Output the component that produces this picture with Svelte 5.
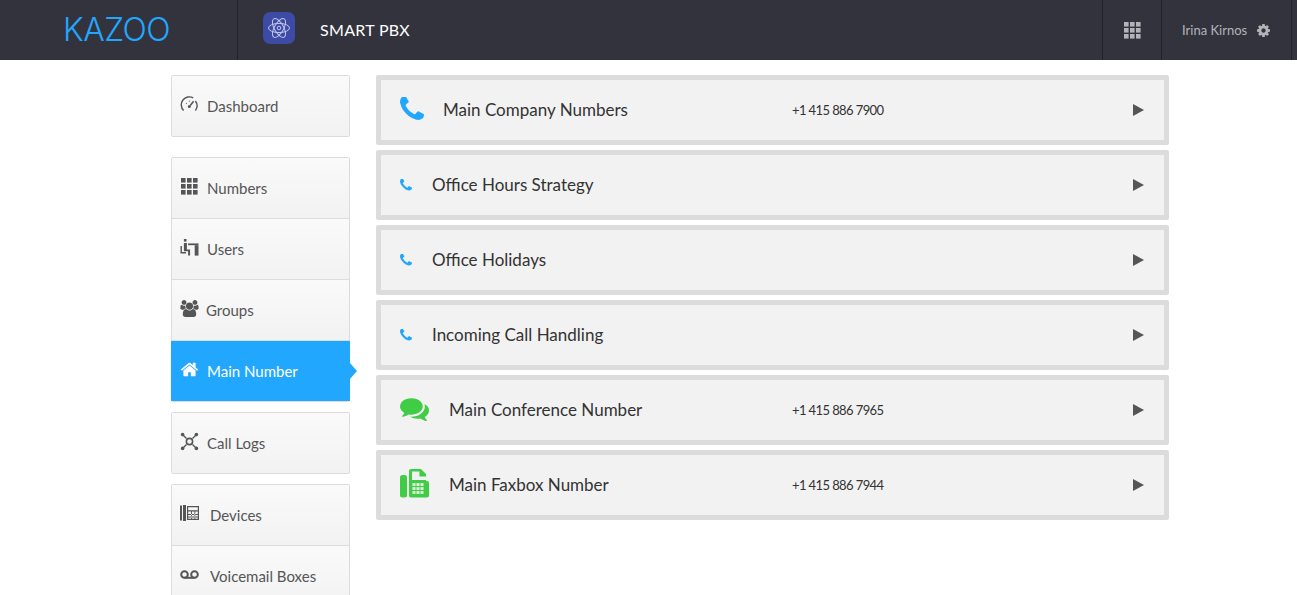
<script>
  const phone = 'M1600 1240q0 27-10 70.5t-21 68.5q-21 50-122 106-94 51-186 51-27 0-53-3.5t-57.5-12.5-47-14.5-55.5-20.5-49-18q-98-35-175-83-127-79-264-216t-216-264q-48-77-83-175-3-9-18-49t-20.5-55.5-14.5-47-12.5-57.5-3.5-53q0-92 51-186 56-101 106-122 25-11 68.5-21t70.5-10q14 0 21 3 18 6 53 76 11 19 30 54t35 63.5 31 53.5q3 4 17.5 25t21.5 35.5 7 28.5q0 20-28.5 50t-62 55-62 53-28.5 46q0 9 5 22.5t8.5 20.5 14 24 11.5 19q76 137 174 235t235 174q2 1 19 11.5t24 14 20.5 8.5 22.5 5q18 0 46-28.5t53-62 55-62 50-28.5q14 0 28.5 7t35.5 21.5 25 17.5q25 15 53.5 31t63.5 35 54 30q70 35 76 53 3 7 3 21z';
  const comments = 'M1408 768q0 139-94 257t-256.5 186.5-353.5 68.5q-86 0-176-16-124 88-278 128-36 9-86 16h-3q-11 0-20.5-8t-11.5-21q-1-3-1-6.5t.5-6.5 2-6l2.5-5 3.5-5.5 4-5 4.5-5 4-4.5q5-6 23-25t26-29.5 22.5-29 25-38.5 20.5-44q-124-72-195-177t-71-224q0-139 94-257t256.5-186.5 353.5-68.5 353.5 68.5 256.5 186.5 94 257zm384 256q0 120-71 224.5t-195 176.5q10 24 20.5 44t25 38.5 22.5 29 26 29.5 23 25q1 1 4 4.5t4.5 5 4 5 3.5 5.5l2.5 5 2 6 .5 6.5-1 6.5q-3 14-13 22t-22 7q-50-7-86-16-154-40-278-128-90 16-176 16-271 0-472-132 58 4 88 4 161 0 309-45t264-129q125-92 192-212t67-254q0-77-23-152 129 71 204 178t75 230z';
  const home = 'M1472 992v480q0 26-19 45t-45 19h-384v-384h-256v384h-384q-26 0-45-19t-19-45v-480q0-1 .5-3t.5-3l575-474 575 474q1 2 1 6zm223-69l-62 74q-8 9-21 11h-3q-13 0-21-7l-692-577-692 577q-12 8-24 7-13-2-21-11l-62-74q-8-10-7-23.5t11-21.5l719-599q32-26 76-26t76 26l244 204v-195q0-14 9-23t23-9h192q14 0 23 9t9 23v408l219 182q10 8 11 21.5t-7 23.5z';
  const group = 'M529 896q-162 5-265 128h-134q-82 0-138-40.5t-56-118.5q0-353 124-353 6 0 43.5 21t97.5 42.5 119 21.5q67 0 133-23-5 37-5 66 0 139 81 256zm1071 637q0 120-73 189.5t-194 69.5h-874q-121 0-194-69.5t-73-189.5q0-53 3.5-103.5t14-109 26.5-108.5 43-97.5 62-81 85.5-53.5 111.5-20q10 0 43 21.5t73 48 107 48 135 21.5 135-21.5 107-48 73-48 43-21.5q61 0 111.5 20t85.5 53.5 62 81 43 97.5 26.5 108.5 14 109 3.5 103.5zm-1024-1277q0 106-75 181t-181 75-181-75-75-181 75-181 181-75 181 75 75 181zm704 384q0 159-112.5 271.5t-271.5 112.5-271.5-112.5-112.5-271.5 112.5-271.5 271.5-112.5 271.5 112.5 112.5 271.5zm576 225q0 78-56 118.5t-138 40.5h-134q-103-123-265-128 81-117 81-256 0-29-5-66 66 23 133 23 59 0 119-21.5t97.5-42.5 43.5-21q124 0 124 353zm-128-609q0 106-75 181t-181 75-181-75-75-181 75-181 181-75 181 75 75 181z';
  const gear = 'M1152 896q0-106-75-181t-181-75-181 75-75 181 75 181 181 75 181-75 75-181zm512-109v222q0 12-8 23t-20 13l-185 28q-19 54-39 91 35 50 107 138 10 12 10 25t-9 23q-27 37-99 108t-94 71q-12 0-26-9l-138-108q-44 23-91 38-16 136-29 186-7 28-36 28h-222q-14 0-24.5-8.5t-11.5-21.5l-28-184q-49-16-90-37l-141 107q-10 9-25 9-14 0-25-11-126-114-165-168-7-10-7-23 0-12 8-23 15-21 51-66.5t54-70.5q-27-50-41-99l-183-27q-13-2-21-12.5t-8-23.5v-222q0-12 8-23t19-13l186-28q14-46 39-92-40-57-107-138-10-12-10-24 0-10 9-23 26-36 98.5-107.5t94.5-71.5q13 0 26 10l138 107q44-23 91-38 16-136 29-186 7-28 36-28h222q14 0 24.5 8.5t11.5 21.5l28 184q49 16 90 37l142-107q9-9 24-9 13 0 25 10 129 119 165 170 7 8 7 22 0 12-8 23-15 21-51 66.5t-54 70.5q26 50 41 98l183 28q13 2 21 12.5t8 23.5z';

  const rows = [
    { name: 'Main Company Numbers', number: '+1 415 886 7900', icon: 'phone', slot: 'wide' },
    { name: 'Office Hours Strategy', icon: 'phone-sm', slot: 'narrow' },
    { name: 'Office Holidays', icon: 'phone-sm', slot: 'narrow' },
    { name: 'Incoming Call Handling', icon: 'phone-sm', slot: 'narrow' },
    { name: 'Main Conference Number', number: '+1 415 886 7965', icon: 'chat', slot: 'widest' },
    { name: 'Main Faxbox Number', number: '+1 415 886 7944', icon: 'fax', slot: 'widest' }
  ];
</script>

<div class="page">
  <header class="topbar">
    <div class="logo-cell"><span class="logo">KAZOO</span></div>
    <div class="app-cell">
      <span class="app-icon">
        <svg width="32" height="32" viewBox="0 0 32 32" fill="none" stroke="#c3c8e6" stroke-width="1">
          <ellipse cx="16" cy="16" rx="10.5" ry="4.6" />
          <ellipse cx="16" cy="16" rx="10.5" ry="4.6" transform="rotate(60 16 16)" />
          <ellipse cx="16" cy="16" rx="10.5" ry="4.6" transform="rotate(120 16 16)" />
          <circle cx="16" cy="16" r="1.8" />
        </svg>
      </span>
      <span class="app-name">SMART PBX</span>
    </div>
    <div class="launcher">
      <svg width="17" height="17" viewBox="0 0 17 17" fill="#b4b4b8">
        {#each [0, 6, 12] as y}
          {#each [0, 6, 12] as x}
            <rect {x} {y} width="4.6" height="4.6" />
          {/each}
        {/each}
      </svg>
    </div>
    <div class="user">
      <span>Irina Kirnos</span>
      <svg width="13" height="13" viewBox="128 128 1536 1536" fill="#b4b4b8"><path d={gear} /></svg>
    </div>
  </header>

  <main class="body">
    <nav class="sidebar">
      <div class="nav-group">
        <div class="nav-item">
          <svg class="nav-icon" width="19" height="19" viewBox="0 0 19 19" fill="none" stroke="#555" stroke-width="1.4">
            <path d="M3.6 15.5a8 8 0 0 1 9.6-12.6M15.4 6a8 8 0 0 1 0 9.5" />
            <path d="M6.2 8.3l.5.5M9.5 5.8v.8" />
            <path d="M13.6 6.2l-3.4 4.4" stroke-width="1.6" />
            <circle cx="9.3" cy="11.6" r="1.5" fill="#555" stroke="none" />
          </svg>
          <span>Dashboard</span>
        </div>
      </div>

      <div class="nav-group">
        <div class="nav-item">
          <svg class="nav-icon" width="17" height="17" viewBox="0 0 17 17" fill="#555">
            {#each [0, 6, 12] as y}
              {#each [0, 6, 12] as x}
                <rect {x} {y} width="4.6" height="4.6" />
              {/each}
            {/each}
          </svg>
          <span>Numbers</span>
        </div>
        <div class="nav-item">
          <svg class="nav-icon" width="18" height="17" viewBox="0 0 18 17" fill="#555">
            <rect x="3.4" y="0" width="2.6" height="2.6" />
            <path d="M0 7h1.4v6H5.5v1.4H0z" />
            <path d="M3.4 4h3v6.4h3.2v6.2H7.6v-4.4H3.4z" />
            <path d="M7.6 4.4H18V6.2H7.6z" />
            <path d="M14.2 6.2H18v10.4h-3.8z" />
          </svg>
          <span>Users</span>
        </div>
        <div class="nav-item">
          <svg class="nav-icon groups" width="18" height="17" viewBox="-64 0 1920 1792" fill="#555"><path d={group} /></svg>
          <span>Groups</span>
        </div>
        <div class="nav-item active">
          <svg class="nav-icon" width="18" height="17" viewBox="0 128 1792 1536" fill="#fff"><path d={home} /></svg>
          <span>Main Number</span>
        </div>
      </div>

      <div class="nav-group">
        <div class="nav-item">
          <svg class="nav-icon" width="19" height="19" viewBox="0 0 19 19" fill="#555" stroke="#555" stroke-width="1.4">
            <path d="M3 3l3.5 3.5M16 3l-3.5 3.5M3 16l3.5-3.5M16 16l-3.5-3.5" />
            <circle cx="9.5" cy="9.5" r="3.1" fill="none" stroke-width="1.6" />
            <circle cx="2.6" cy="2.6" r="1.8" stroke="none" />
            <circle cx="16.4" cy="2.6" r="1.8" stroke="none" />
            <circle cx="2.6" cy="16.4" r="1.8" stroke="none" />
            <circle cx="16.4" cy="16.4" r="1.8" stroke="none" />
          </svg>
          <span>Call Logs</span>
        </div>
      </div>

      <div class="nav-group">
        <div class="nav-item">
          <svg class="nav-icon devices" width="19" height="16" viewBox="0 0 19 16" fill="#555">
            <rect x="0" y="0.5" width="2" height="15" />
            <rect x="3" y="0" width="3" height="16" />
            <path d="M7 1h12v14H7zM8.2 2.2v3h9.6v-3zM8.2 6.4v7.4h9.6V6.4z" fill-rule="evenodd" />
            <path d="M8 9h10v.9H8zM8 11.6h10v.9H8zM11 6v8h.9V6zM14.4 6v8h.9V6z" />
          </svg>
          <span>Devices</span>
        </div>
        <div class="nav-item">
          <svg class="nav-icon vm" width="19" height="9" viewBox="0 0 19 9" fill="none" stroke="#555" stroke-width="2">
            <circle cx="4.5" cy="4.5" r="3.3" />
            <circle cx="14.5" cy="4.5" r="3.3" />
            <path d="M4.5 7.8h10" />
          </svg>
          <span>Voicemail Boxes</span>
        </div>
      </div>
    </nav>

    <section class="rows">
      {#each rows as row}
        <div class="row">
          <div class="row-left">
            <span class="row-icon {row.slot}">
              {#if row.icon === 'phone'}
                <svg width="24" height="24" viewBox="192 192 1408 1408" fill="#22a7ff"><path d={phone} /></svg>
              {:else if row.icon === 'phone-sm'}
                <svg width="12" height="12" viewBox="192 192 1408 1408" fill="#22a7ff"><path d={phone} /></svg>
              {:else if row.icon === 'chat'}
                <svg width="29" height="25" viewBox="0 128 1792 1536" fill="#41cc46"><path d={comments} /></svg>
              {:else}
                <svg width="29" height="29" viewBox="0 0 29 29" fill="#41cc46">
                  <rect x="0" y="6" width="7" height="22.5" rx="2.5" />
                  <path d="M9 12V2a2 2 0 0 1 2-2h10l5 5v7h1a2 2 0 0 1 2 2v12.5a2 2 0 0 1-2 2H11a2 2 0 0 1-2-2z" />
                  <path d="M12 2.4h7.4v5.2H26v3.4H12z" fill="#f2f2f2" />
                  {#each [14, 18, 22] as y}
                    {#each [12.5, 16.5, 20.5] as x}
                      <rect {x} {y} width="3" height="3" fill="#d9f5da" />
                    {/each}
                  {/each}
                </svg>
              {/if}
            </span>
            <span class="row-name">{row.name}</span>
          </div>
          {#if row.number}<span class="row-number">{row.number}</span>{/if}
          <svg class="row-arrow" width="11" height="12" viewBox="0 0 11 12" fill="#555"><path d="M0 0l11 6-11 6z" /></svg>
        </div>
      {/each}
    </section>
  </main>
</div>

<style>
  :global(body) {
    background: #fff;
  }

  .page {
    height: 595px;
    overflow: hidden;
    font-family: "Lato", "Liberation Sans", sans-serif;
  }

  .topbar {
    display: flex;
    align-items: stretch;
    height: 60px;
    background: #32333d;
    padding-right: 5px;
    box-sizing: border-box;
  }

  .logo-cell {
    width: 238px;
    box-sizing: border-box;
    border-right: 1px solid #22232a;
    padding-left: 63px;
    display: flex;
    align-items: center;
  }

  .logo {
    font-family: "Inter", sans-serif;
    font-weight: 300;
    font-size: 32px;
    letter-spacing: -0.5px;
    color: #22a7ff;
    line-height: 1;
  }

  .app-cell {
    flex: 1;
    display: flex;
    align-items: center;
    padding-left: 25px;
  }

  .app-icon {
    display: flex;
    width: 32px;
    height: 32px;
    margin-top: -4px;
    border-radius: 7px;
    background: #3d4aa6;
  }

  .app-name {
    margin-left: 25px;
    margin-top: -2px;
    font-size: 16px;
    letter-spacing: 0.3px;
    color: #fff;
  }

  .launcher {
    width: 59px;
    box-sizing: border-box;
    border-left: 1px solid #22232a;
    display: flex;
    align-items: center;
    justify-content: center;
  }

  .user {
    width: 131px;
    box-sizing: border-box;
    border-left: 1px solid #22232a;
    border-right: 1px solid #22232a;
    padding-left: 20px;
    display: flex;
    align-items: center;
    gap: 10px;
    font-size: 13px;
    color: #b4b4b8;
  }

  .body {
    display: flex;
    align-items: flex-start;
    gap: 26px;
    padding: 15px 0 0 171px;
  }

  .sidebar {
    width: 179px;
    flex-shrink: 0;
    display: flex;
    flex-direction: column;
    gap: 10px;
  }

  .nav-group {
    border: 1px solid #dcdcdc;
    border-radius: 2px;
  }

  .nav-group:first-child {
    margin-bottom: 10px;
  }

  .nav-item {
    position: relative;
    display: flex;
    align-items: center;
    height: 60px;
    padding-left: 8px;
    background: linear-gradient(#fafafa, #f2f2f2);
    border-bottom: 1px solid #dcdcdc;
    font-size: 15px;
    color: #555;
  }

  .nav-item:last-child {
    border-bottom: none;
  }

  .nav-item span {
    margin-left: 8px;
  }

  .nav-icon {
    width: 19px;
    flex-shrink: 0;
    margin-top: -4px;
  }

  .devices + span,
  .vm + span {
    margin-left: 11px;
  }

  .groups + span {
    margin-left: 7px;
  }

  .nav-item.active {
    margin: 0 -1px;
    padding-left: 9px;
    background: #22a7ff;
    color: #fff;
    border-bottom: none;
  }

  .nav-item.active::after {
    content: "";
    position: absolute;
    left: 100%;
    top: 22px;
    border-left: 7px solid #22a7ff;
    border-top: 8px solid transparent;
    border-bottom: 8px solid transparent;
  }

  .rows {
    width: 793px;
    display: flex;
    flex-direction: column;
    gap: 5px;
  }

  .row {
    display: flex;
    align-items: center;
    height: 70px;
    box-sizing: border-box;
    padding: 0 20px 0 19px;
    background: #f2f2f2;
    border: 5px solid #dcdcdc;
    border-radius: 2px;
  }

  .row-left {
    display: flex;
    align-items: center;
    width: 392px;
    flex-shrink: 0;
  }

  .row-icon {
    display: flex;
    margin-top: -2px;
  }

  .row-icon.wide { width: 43px; }
  .row-icon.narrow { width: 32px; margin-top: 0; }
  .row-icon.widest { width: 49px; margin-top: -4px; }

  .row-name {
    margin-top: -2px;
    font-size: 17px;
    color: #333;
  }

  .row-number {
    font-size: 13px;
    letter-spacing: -0.6px;
    color: #333;
  }

  .row-arrow {
    margin-left: auto;
  }
</style>
